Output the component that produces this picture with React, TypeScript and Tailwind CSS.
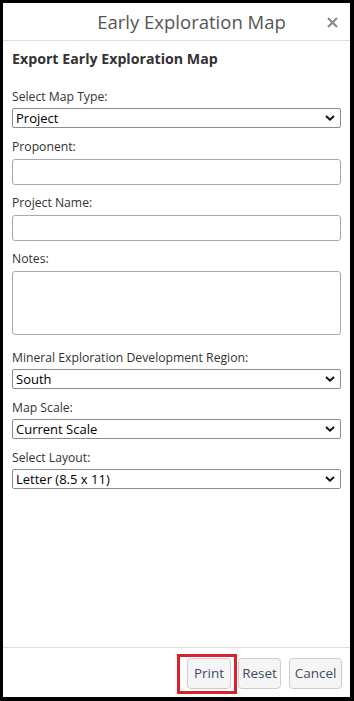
import { useState } from "react";

const font = { fontFamily: '"Open Sans", "Noto Sans", sans-serif' };

function Chevron() {
  return (
    <svg
      className="pointer-events-none absolute right-[6px] top-1/2 -translate-y-1/2"
      width="10"
      height="7"
      viewBox="0 0 10 7"
    >
      <path d="M1 1.5 L5 5.2 L9 1.5" fill="none" stroke="#111" strokeWidth="2" />
    </svg>
  );
}

function SelectField({
  label,
  value,
  options,
  onChange,
  className = "",
}: {
  label: string;
  value: string;
  options: string[];
  onChange: (v: string) => void;
  className?: string;
}) {
  return (
    <div className={className}>
      <div className="text-[12.2px] leading-4 text-[#333] mb-[3px]">{label}</div>
      <div className="relative">
        <select
          value={value}
          onChange={(e) => onChange(e.target.value)}
          className="block w-full h-[20px] appearance-none rounded-[2px] border border-[#8c8c8c] bg-white pl-[3px] pr-5 text-[13px] leading-[18px] text-black outline-none"
        >
          {options.map((o) => (
            <option key={o}>{o}</option>
          ))}
        </select>
        <Chevron />
      </div>
    </div>
  );
}

function TextField({ label, className = "" }: { label: string; className?: string }) {
  return (
    <div className={className}>
      <div className="text-[12.2px] leading-4 text-[#333] mb-[4px]">{label}</div>
      <input
        type="text"
        className="block w-full h-[26px] rounded-[3px] border border-[#aaa] bg-white px-1 text-[13px] outline-none"
      />
    </div>
  );
}

export default function App() {
  const [mapType, setMapType] = useState("Project");
  const [region, setRegion] = useState("South");
  const [scale, setScale] = useState("Current Scale");
  const [layout, setLayout] = useState("Letter (8.5 x 11)");

  return (
    <div
      style={font}
      className="w-[354px] h-[701px] border-l-[3px] border-t-[3px] border-r-[4px] border-b-[4px] border-black bg-white flex flex-col"
    >
      <div className="h-[38px] shrink-0 border-b border-[#ddd] flex items-center relative">
        <div className="w-full pl-[30px] text-center text-[18.5px] text-[#555]">
          Early Exploration Map
        </div>
        <button className="absolute right-[11px] top-[12px] w-[14px] h-[14px] flex items-center justify-center">
          <svg width="11" height="11" viewBox="0 0 11 11">
            <path d="M1 1 L10 10 M10 1 L1 10" stroke="#8a8a8a" strokeWidth="2.2" />
          </svg>
        </button>
      </div>

      <div className="flex-1 px-[9px]">
        <div className="mt-[8px] text-[14.2px] leading-5 font-bold text-[#333]">
          Export Early Exploration Map
        </div>

        <SelectField
          className="mt-[20px]"
          label="Select Map Type:"
          value={mapType}
          onChange={setMapType}
          options={["Project", "Regional"]}
        />
        <TextField className="mt-[11px]" label="Proponent:" />
        <TextField className="mt-[10px]" label="Project Name:" />

        <div className="mt-[10px]">
          <div className="text-[12.2px] leading-4 text-[#333] mb-[4px]">Notes:</div>
          <textarea className="block w-full h-[64px] resize-none rounded-[3px] border border-[#aaa] bg-white px-1 text-[13px] outline-none" />
        </div>

        <SelectField
          className="mt-[15px]"
          label="Mineral Exploration Development Region:"
          value={region}
          onChange={setRegion}
          options={["South", "North", "Central"]}
        />
        <SelectField
          className="mt-[11px]"
          label="Map Scale:"
          value={scale}
          onChange={setScale}
          options={["Current Scale", "1:50,000", "1:250,000"]}
        />
        <SelectField
          className="mt-[11px]"
          label="Select Layout:"
          value={layout}
          onChange={setLayout}
          options={["Letter (8.5 x 11)", "Tabloid (11 x 17)"]}
        />
      </div>

      <div className="shrink-0 border-t border-[#ddd] pt-[10px] pb-[8px] pr-[8px] flex justify-end">
        <div className="relative">
          <button className="h-[31px] w-[44px] rounded-[4px] border border-[#ccc] bg-[#f5f5f5] text-[13.5px] text-[#3f4b66]">
            Print
          </button>
          <span className="pointer-events-none absolute -left-[10px] -right-[6px] -top-[4px] -bottom-[5px] border-[3px] border-[#d8232f]" />
        </div>
        <button className="ml-[7px] h-[31px] w-[43px] rounded-[4px] border border-[#ccc] bg-[#f5f5f5] text-[13.5px] text-[#3f4b66]">
          Reset
        </button>
        <button className="ml-[8px] h-[31px] w-[53px] rounded-[4px] border border-[#ccc] bg-[#f5f5f5] text-[13.5px] text-[#3f4b66]">
          Cancel
        </button>
      </div>
    </div>
  );
}
